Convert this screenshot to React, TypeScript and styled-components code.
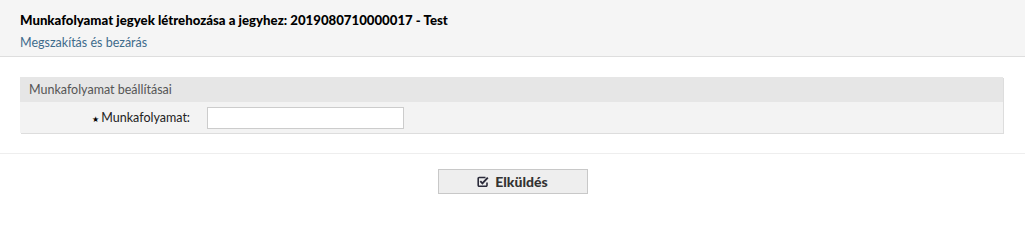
import React from 'react';
import styled, { createGlobalStyle } from 'styled-components';

const GlobalStyle = createGlobalStyle`
  body {
    margin: 0;
    background: #fff;
    font-family: Lato, "Noto Sans", sans-serif;
    color: #333;
  }
`;

// check-square-o, drawn by hand
function CheckSquareIcon() {
  return (
    <svg width="12" height="11" viewBox="0 0 12 11" aria-hidden="true">
      <path d="M8.5 1.5H2.2A1 1 0 0 0 1.2 2.5V9.3A1 1 0 0 0 2.2 10.3H9A1 1 0 0 0 10 9.3V6.5" fill="none" stroke="#2b2b3a" strokeWidth="1.6" />
      <path d="M3.3 5.2L5.4 7.3L10.8 1.6" fill="none" stroke="#2b2b3a" strokeWidth="1.9" />
    </svg>
  );
}

function App() {
  return (
    <>
      <GlobalStyle />
      <Header>
        <Title>Munkafolyamat jegyek létrehozása a jegyhez: 2019080710000017 - Test</Title>
        <CancelLink href="#">Megszakítás és bezárás</CancelLink>
      </Header>
      <Content>
        <Widget>
          <WidgetHead>Munkafolyamat beállításai</WidgetHead>
          <WidgetBody>
            <Label>
              <Star>★</Star>Munkafolyamat:
            </Label>
            <Input type="text" />
          </WidgetBody>
        </Widget>
      </Content>
      <Footer>
        <SubmitButton>
          <CheckSquareIcon />
          Elküldés
        </SubmitButton>
      </Footer>
    </>
  );
}

const Header = styled.div`
  background: #f5f5f5;
  border-bottom: 1px solid #dedede;
  height: 57px;
  box-sizing: border-box;
  padding: 10px 20px 0;
`;

const Title = styled.h1`
  margin: 0;
  font-size: 13.2px;
  font-weight: 900;
  color: #000;
  line-height: 20px;
`;

const CancelLink = styled.a`
  display: block;
  margin-top: 4px;
  font-size: 12.5px;
  line-height: 18px;
  color: #3e6b8c;
  text-decoration: none;
`;

const Content = styled.div`
  padding: 20px 22px 20px 20px;
  border-bottom: 1px solid #eeeeee;
`;

const Widget = styled.div`
  background: #f3f3f3;
  box-shadow: 1px 1px 0 #dddddd;
`;

const WidgetHead = styled.div`
  background: #e6e6e6;
  height: 25px;
  line-height: 25px;
  padding-left: 9px;
  font-size: 12.5px;
  color: #555;
`;

const WidgetBody = styled.div`
  display: flex;
  align-items: center;
  height: 31px;
  gap: 17px;
`;

const Label = styled.label`
  width: 170px;
  text-align: right;
  font-size: 12.5px;
  color: #222;
`;

const Star = styled.span`
  font-size: 8px;
  margin-right: 2px;
  color: #000;
`;

const Input = styled.input`
  width: 197px;
  height: 22px;
  box-sizing: border-box;
  border: 1px solid #cccccc;
  background: #fff;
  margin: 0;
`;

const Footer = styled.div`
  display: flex;
  justify-content: center;
  padding-top: 15px;
`;

const SubmitButton = styled.button`
  display: flex;
  align-items: center;
  justify-content: center;
  gap: 6px;
  width: 150px;
  height: 25px;
  background: #eeeeee;
  border: 1px solid #c8c8c8;
  border-radius: 0;
  font-family: Lato, "Noto Sans", sans-serif;
  font-size: 14px;
  font-weight: 900;
  color: #333;
  padding: 0;
`;

export default App;
